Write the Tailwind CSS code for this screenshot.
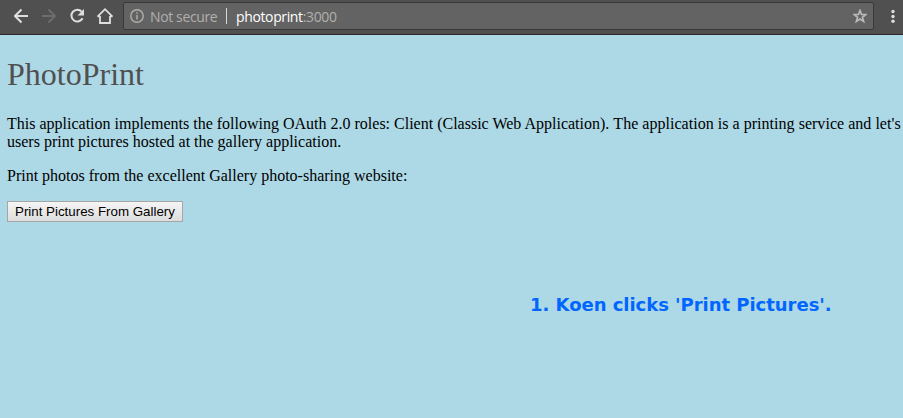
<!DOCTYPE html>
<html lang="en">
<head>
<meta charset="utf-8">
<title>PhotoPrint</title>
<script src="https://cdn.jsdelivr.net/npm/@tailwindcss/browser@4"></script>
</head>
<body class="h-screen overflow-hidden bg-[#add8e6] font-['Liberation_Serif',serif] text-base text-black">
<header class="flex h-[35px] items-start border-b border-[#292929] bg-[#505050] pl-3 font-['Open_Sans',sans-serif] text-[14px] tracking-[-0.37px]">
  <nav class="flex h-8 items-center gap-3 pl-0.5">
    <svg class="size-4" viewBox="0 0 16 16" fill="none" stroke="#dedede" stroke-width="2"><path d="M14 8H1.5M7.500 1.500 1 8l6.500 6.500"/></svg>
    <svg class="size-4" viewBox="0 0 16 16" fill="none" stroke="#6c6c6c" stroke-width="2"><path d="M0 8h12.500M6.500 1.500 13 8l-6.500 6.500"/></svg>
    <svg class="size-4" viewBox="0 0 16 16"><path d="M11.700 3.600A5.900 5.900 0 1 0 12.600 10.300" fill="none" stroke="#dedede" stroke-width="2"/><path d="M14 1v6.500H7.500z" fill="#dedede"/></svg>
    <svg class="size-4 overflow-visible" viewBox="0 0 16 16" fill="none" stroke="#dedede" stroke-width="1.800"><path d="M-.5 8.600 7 1.200l7.500 7.400M-.5 8.400H2M12 8.400h2.500M2 8V15h10V8"/></svg>
  </nav>
  <div class="mt-0.5 ml-[9px] flex h-7 w-[751px] items-center rounded-[2px] border border-[#393939] bg-[#636363] px-1.5">
    <svg class="size-3.5" viewBox="0 0 14 14" fill="none" stroke="#b0b0ac" stroke-width="1.400"><circle cx="7" cy="7" r="6.200"/><path d="M7 6v4.500M7 3.300v1.500"/></svg>
    <span class="ml-1.5 w-[67px] whitespace-nowrap text-[#b0b0ac]">Not secure</span>
    <span class="ml-[9px] h-4 w-px bg-[#d8d8d8]"></span>
    <span class="ml-[9px] whitespace-nowrap text-[#b0b0ac]"><span class="text-white">photoprint</span>:3000</span>
    <svg class="ml-auto size-3.5" viewBox="0 0 14 14" fill="none" stroke="#b8b8b8" stroke-width="1.700"><path d="m7 1.500 1.500 3.900 4.300.2-3.400 2.600 1.200 4.200L7 10l-3.600 2.400 1.200-4.200L1.200 5.600l4.300-.2z"/></svg>
  </div>
  <svg class="mt-[9px] ml-[16.500px] h-3.5 w-1" viewBox="0 0 4 14" fill="#dedede"><circle cx="2" cy="2.500" r="1.700"/><circle cx="2" cy="7.500" r="1.700"/><circle cx="2" cy="12.300" r="1.700"/></svg>
</header>
<main class="pl-[7px]">
  <h1 class="pt-[21px] text-[32px] leading-[36px] text-[#505050]">PhotoPrint</h1>
  <p class="mt-[23px] leading-[18px] whitespace-nowrap">This application implements the following OAuth 2.0 roles: Client (Classic Web Application). <span class="tracking-[0.03px]">The application is a printing service and let's</span><br>users print pictures hosted at the gallery application.</p>
  <p class="mt-4 leading-[18px]">Print photos from the excellent Gallery photo-sharing website:</p>
  <button class="mt-4 flex h-[21px] w-[176px] items-center justify-center border border-[#a6a6a6] bg-linear-to-b from-[#f5f5f5] to-[#dddddd] font-['Liberation_Sans',sans-serif] text-[13.333px] whitespace-nowrap">Print Pictures From Gallery</button>
  <p class="mt-[71px] ml-[523px] font-['DejaVu_Sans',sans-serif] text-[18px] leading-6 font-bold tracking-[-0.03px] whitespace-nowrap text-[#0066ff]">1. Koen clicks 'Print Pictures'.</p>
</main>
</body>
</html>
